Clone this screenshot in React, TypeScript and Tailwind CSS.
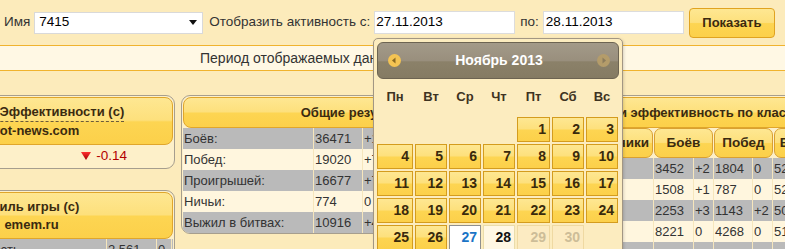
const gold =
  "bg-[linear-gradient(to_bottom,#fee792_0%,#fde07c_48%,#fdd552_52%,#fcd04a_100%)]";

function Arrow({ dir, active }: { dir: "l" | "r"; active: boolean }) {
  return (
    <svg width="13" height="13" viewBox="0 0 13 13">
      <circle cx="6.5" cy="6.5" r="6.5" fill={active ? "#f4c453" : "#b49c6a"} />
      {dir === "l" ? (
        <path d="M4 6.5L7.5 3.5V9.5Z" fill={active ? "#8a6a22" : "#8c7c5c"} />
      ) : (
        <path d="M9 6.5L5.5 3.5V9.5Z" fill={active ? "#8a6a22" : "#8c7c5c"} />
      )}
    </svg>
  );
}

function Calendar() {
  const names = ["Пн", "Вт", "Ср", "Чт", "Пт", "Сб", "Вс"];
  const cells: (number | null)[] = [null, null, null, null];
  for (let d = 1; d <= 30; d++) cells.push(d);
  return (
    <div className="absolute left-[373px] top-[38px] w-[250px] h-[240px] border border-[#a29683] rounded-[5px] bg-[#fcecbf] px-[3px] pt-[3px] shadow-[1px_1px_3px_rgba(0,0,0,0.15)]">
      <div className="h-[37px] rounded-[6px] border border-[#6d6452] bg-[linear-gradient(to_bottom,#a39a89_0%,#998f7d_50%,#8b8169_54%,#857b63_100%)] flex items-center justify-between pl-[10px] pr-[8px]">
        <Arrow dir="l" active />
        <span className="text-white font-bold text-[14px]">Ноябрь 2013</span>
        <Arrow dir="r" active={false} />
      </div>
      <div className="grid grid-cols-[36px_32px_32px_32px_33px_32px_32px] grid-rows-[36px] auto-rows-[25px] gap-[2px]">
        {names.map((n) => (
          <div key={n} className="flex items-center justify-center font-bold text-[13px] text-[#3e3322]">
            {n}
          </div>
        ))}
        {cells.map((d, i) => {
          if (d === null) return <div key={"e" + i} />;
          let cls = `border border-[#d49c1e] ${gold} text-[#3a2a0c]`;
          if (d === 27) cls = "border border-[#8f8f8f] bg-white text-[#1b74c6]";
          else if (d === 28) cls = "border border-[#eadcab] bg-[#fff7e4] text-[#111]";
          else if (d > 28) cls = "border border-[#efd9a2] bg-[#fcebc2] text-[#cdbd98]";
          return (
            <div key={d} className={`${cls} flex items-center justify-end pr-[3px] font-bold text-[14px]`}>
              {d}
            </div>
          );
        })}
      </div>
    </div>
  );
}

function Row({
  cols,
  widths,
  gray,
}: {
  cols: string[];
  widths: string[];
  gray: boolean;
}) {
  return (
    <div className={`flex h-[21px] ${gray ? "bg-[#bababa]" : "bg-[#fff6de]"}`}>
      {cols.map((c, i) => (
        <div
          key={i}
          className={`${widths[i]} shrink-0 h-full flex items-center pl-[1px] whitespace-nowrap border-r border-[#f6e6bc] overflow-hidden`}
        >
          {c}
        </div>
      ))}
    </div>
  );
}

export default function App() {
  const midW = ["w-[131px]", "w-[49px]", "w-[40px]", "w-[60px]", "w-[80px]"];
  const rightW = [
    "w-[104px]",
    "w-[40px]",
    "w-[20px]",
    "w-[39px]",
    "w-[20px]",
    "w-[40px]",
    "w-[20px]",
    "w-[40px]",
    "w-[20px]",
  ];
  return (
    <div className="relative w-[785px] h-[249px] overflow-hidden bg-[#fcebbb] text-[13px] text-[#333] font-['Liberation_Sans',Arial,sans-serif]">
      {/* top filter bar */}
      <div className="flex items-center h-[45px] pl-[4px] text-[13.5px]">
        <span>Имя</span>
        <div className="ml-[4px] w-[169px] h-[22px] bg-white border border-[#d9d9d9] flex items-center justify-between pl-[4px] pr-[5px] text-black">
          <span>7415</span>
          <svg width="8" height="5" viewBox="0 0 8 5">
            <path d="M0 0H8L4 5Z" fill="#111" />
          </svg>
        </div>
        <span className="ml-[6px]">Отобразить активность с:</span>
        <div className="ml-[4px] w-[141px] h-[23px] bg-white border border-[#dcdcdc] flex items-center pl-[1px] text-black">
          27.11.2013
        </div>
        <span className="ml-[5px]">по:</span>
        <div className="ml-[4px] w-[141px] h-[23px] bg-white border border-[#dcdcdc] flex items-center pl-[2px] text-black">
          28.11.2013
        </div>
        <button
          className={`ml-[5px] w-[86px] h-[30px] rounded-[4px] border border-[#e0a320] ${gold} font-bold text-[#3b2a10] text-[13px]`}
        >
          Показать
        </button>
      </div>

      {/* period band */}
      <div className="h-[26px] border-y border-[#f0b32e] bg-[#fff8e4] flex items-center pl-[200px] text-[14px] whitespace-nowrap">
        Период отображаемых данных: с 27.11.2013 по 28.11.2013
      </div>

      {/* panels */}
      <div className="flex items-start mt-[24px]">
        {/* left column */}
        <div className="ml-[-106px] w-[281px] shrink-0 flex flex-col gap-[21px]">
          <div className="border border-[#a69e8e] rounded-[9px] bg-[#fdf0c9] p-[1px]">
            <div
              className={`h-[48px] rounded-[8px] border border-[#e0a62b] ${gold} flex flex-col items-center justify-center font-bold text-[13px] text-[#3a2a10] leading-[18px]`}
            >
              <span className="border-b border-dashed border-[#6a5a3a]">Рейтинг Эффективности (с)</span>
              <span>wot-news.com</span>
            </div>
            <div className="h-[22px] flex items-center justify-end pr-[46px] text-[#b30000] text-[13.5px]">
              <svg width="10" height="8" viewBox="0 0 10 8" className="mr-[5px]">
                <defs>
                  <linearGradient id="rt" x1="0" y1="0" x2="0" y2="1">
                    <stop offset="0" stopColor="#ff3030" />
                    <stop offset="1" stopColor="#a00000" />
                  </linearGradient>
                </defs>
                <path d="M0 0H10L5 8Z" fill="url(#rt)" />
              </svg>
              -0.14
            </div>
          </div>
          <div className="border border-[#a69e8e] rounded-[9px] bg-[#fdf0c9] p-[1px] h-[80px]">
            <div
              className={`h-[47px] rounded-[8px] border border-[#e0a62b] ${gold} flex flex-col items-center justify-center pr-[6px] font-bold text-[13px] text-[#3a2a10] leading-[18px]`}
            >
              <span>Стиль игры (с)</span>
              <span>emem.ru</span>
            </div>
            <Row
              gray
              cols={["Средняя активность", "2 561", "0"]}
              widths={["w-[211px]", "w-[50px]", "w-[15px]"]}
            />
          </div>
        </div>

        {/* middle panel */}
        <div className="ml-[6px] w-[362px] shrink-0 border border-[#a69e8e] rounded-[9px] bg-[#fdf0c9] pt-[1px] px-[1px] overflow-hidden">
          <div
            className={`h-[31px] rounded-[8px] border border-[#e0a62b] ${gold} flex items-center justify-center font-bold text-[13px] text-[#3a2a10]`}
          >
            Общие результаты
          </div>
          <Row gray widths={midW} cols={["Боёв:", "36471", "+14", "", ""]} />
          <Row gray={false} widths={midW} cols={["Побед:", "19020", "+7", "", ""]} />
          <Row gray widths={midW} cols={["Проигрышей:", "16677", "+7", "", ""]} />
          <Row gray={false} widths={midW} cols={["Ничьи:", "774", "0", "", ""]} />
          <Row gray widths={midW} cols={["Выжил в битвах:", "10916", "+4", "", ""]} />
        </div>

        {/* right panel */}
        <div className="ml-[5px] w-[600px] shrink-0 border border-[#a69e8e] rounded-[9px] bg-[#fdf0c9] p-[1px]">
          <div
            className={`h-[31px] rounded-[8px] border border-[#e0a62b] ${gold} flex items-center pl-[68px] font-bold text-[13px] text-[#3a2a10] whitespace-nowrap`}
          >
            и эффективность по классам техники
          </div>
          <div className="flex h-[30px] gap-[1px] font-bold text-[13.5px] text-[#3a2a10]">
            <div className={`w-[103px] shrink-0 rounded-[7px] border border-[#d9a032] ${gold} flex items-center justify-end pr-[3px] whitespace-nowrap overflow-hidden`}>
              Класс техники
            </div>
            {["Боёв", "Побед", "Выжил", "Урон"].map((t) => (
              <div
                key={t}
                className={`w-[59px] shrink-0 rounded-[7px] border border-[#d9a032] ${gold} flex items-center justify-center`}
              >
                {t}
              </div>
            ))}
          </div>
          <Row gray widths={rightW} cols={["", "3452", "+2", "1804", "0", "52%", "", "", ""]} />
          <Row gray={false} widths={rightW} cols={["", "1508", "+1", "787", "0", "52%", "", "", ""]} />
          <Row gray widths={rightW} cols={["", "2253", "+3", "1143", "+2", "50%", "", "", ""]} />
          <Row gray={false} widths={rightW} cols={["", "8221", "0", "4268", "0", "51%", "", "", ""]} />
          <Row gray widths={rightW} cols={["", "", "", "", "", "", "", "", ""]} />
        </div>
      </div>

      <Calendar />
    </div>
  );
}
